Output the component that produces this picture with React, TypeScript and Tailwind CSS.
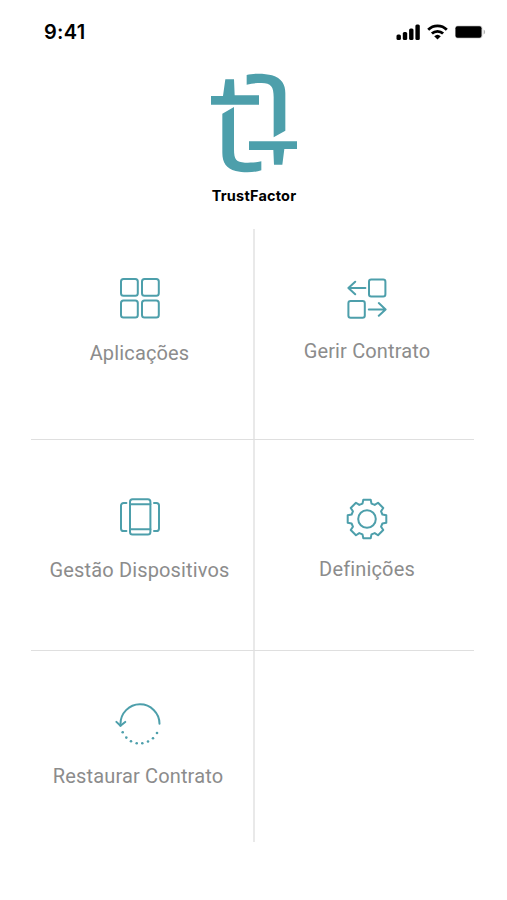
import type { ReactNode } from "react";

const TEAL = "#4d9fab";

type MenuItem = {
  label: string;
  icon: ReactNode;
  className: string;
  labelClassName: string;
};

const iconProps = {
  fill: "none",
  stroke: TEAL,
  strokeWidth: 2,
  strokeLinecap: "round",
  strokeLinejoin: "round",
} as const;

function AppsIcon() {
  return (
    <svg width="40" height="41" viewBox="0 0 40 41" {...iconProps}>
      <rect x="1" y="1" width="16.8" height="16.8" rx="2.5" />
      <rect x="22" y="1" width="16.8" height="16.8" rx="2.5" />
      <rect x="1" y="22.6" width="16.8" height="16.8" rx="2.5" />
      <rect x="22" y="22.6" width="16.8" height="16.8" rx="2.5" />
    </svg>
  );
}

function ContractIcon() {
  return (
    <svg width="40" height="42" viewBox="0 0 40 42" {...iconProps}>
      <rect x="22" y="1.6" width="16.4" height="16.8" rx="2.2" />
      <rect x="1.4" y="23" width="16.4" height="16.8" rx="2.2" />
      <path d="M18.4 10H1.4M8.2 3.7 1.4 10l6.8 6.3" />
      <path d="M21.8 31.4h16.8M31.8 25.1l6.8 6.3-6.8 6.3" />
    </svg>
  );
}

function DevicesIcon() {
  return (
    <svg width="40" height="38" viewBox="0 0 40 38" {...iconProps}>
      <rect x="10" y="1.2" width="20.4" height="35.4" rx="2.5" />
      <path d="M10 6.2h20.4M10 31.2h20.4" />
      <path d="M6.4 5H3.6A2.6 2.6 0 0 0 1 7.6v22.8A2.6 2.6 0 0 0 3.6 33h2.8" />
      <path d="M34 5h2.4A2.6 2.6 0 0 1 39 7.6v22.8a2.6 2.6 0 0 1-2.6 2.6H34" />
    </svg>
  );
}

// One tooth, repeated every 45 degrees around the centre
const TOOTH = [
  [-4.5, -15.4],
  [-3.7, -19.3],
  [3.7, -19.3],
  [4.5, -15.4],
];

const GEAR_POINTS = Array.from({ length: 8 }, (_, i) => {
  const a = (i * Math.PI) / 4;
  return TOOTH.map(([x, y]) => {
    const px = x * Math.cos(a) - y * Math.sin(a);
    const py = x * Math.sin(a) + y * Math.cos(a);
    return `${px.toFixed(2)},${py.toFixed(2)}`;
  }).join(" ");
}).join(" ");

function GearIcon() {
  return (
    <svg width="42" height="42" viewBox="-21 -21 42 42" {...iconProps}>
      <polygon points={GEAR_POINTS} />
      <circle r="8.8" />
    </svg>
  );
}

const DOTS = [
  [7.7, 29.3],
  [11.3, 34.6],
  [16, 38.3],
  [21.7, 40.3],
  [27.3, 40.3],
  [33, 38.5],
  [38, 35.2],
  [42, 30],
];

function RestoreIcon() {
  return (
    <svg width="46" height="43" viewBox="0 0 46 43" {...iconProps}>
      <path d="M5.5 22.7V21A19.5 19.5 0 0 1 44.5 20.7" />
      <path d="M1.4 18.9l4.1 3.9 4.7-3.9" />
      {DOTS.map(([x, y]) => (
        <circle key={x} cx={x} cy={y} r="1.3" fill={TEAL} stroke="none" />
      ))}
    </svg>
  );
}

function Logo() {
  return (
    <svg width="88" height="101" viewBox="45 39 264 303" fill={TEAL}>
      <path d="M91 58H117L119 106H192V134H48V108H84Z" />
      <path d="M155 45C176 39 211 40 231 46C260 55 271 73 271 100V212L236 232V112C236 80 228 69 200 69C184 69 171 70 155 74Z" />
      <path d="M117 141V268C117 299 124 307 150 308C168 308 183 308 199 304V331C178 338 146 339 122 333C94 325 82 308 82 278V161Z" />
      <path d="M162 244H306V267H268L262 314H237L235 270H162Z" />
    </svg>
  );
}

function StatusBar() {
  return (
    <div className="flex h-16 items-center justify-between pr-[21px] pl-11">
      <span className="font-['Inter',sans-serif] text-[20px] font-semibold tracking-[0.3px]">
        9:41
      </span>
      <div className="flex items-center gap-[7px]">
        <svg width="24" height="16" viewBox="0 0 24 16">
          <rect x="0.5" y="10.5" width="4.4" height="5.5" rx="1.5" />
          <rect x="6.8" y="8" width="4.4" height="8" rx="1.5" />
          <rect x="13.1" y="4.5" width="4.4" height="11.5" rx="1.5" />
          <rect x="19.4" y="0.5" width="4.4" height="15.5" rx="1.5" />
        </svg>
        <svg
          width="21"
          height="16"
          viewBox="0 0 21 16"
          fill="none"
          stroke="black"
          strokeWidth="2.8"
        >
          <path d="M1.2 5.8a13.2 13.2 0 0 1 18.6 0" />
          <path d="M4.9 9.6a8 8 0 0 1 11.2 0" />
          <path
            d="M7.2 12.2a4.8 4.8 0 0 1 6.6 0L10.5 15.6Z"
            fill="black"
            stroke="none"
          />
        </svg>
        <svg width="31" height="14" viewBox="0 0 31 14">
          <rect x="0" y="0.5" width="27.5" height="13" rx="3" fill="#d4d4d4" />
          <rect x="0.5" y="1.3" width="26" height="11.4" rx="2" />
          <path d="M28.6 4.5c2 .8 2 4.2 0 5Z" fill="#b5b5b5" />
        </svg>
      </div>
    </div>
  );
}

const ITEMS: MenuItem[] = [
  {
    label: "Aplicações",
    icon: <AppsIcon />,
    className: "pt-[49px] pr-[5px]",
    labelClassName: "mt-5",
  },
  {
    label: "Gerir Contrato",
    icon: <ContractIcon />,
    className: "pt-[49px] pl-[5px]",
    labelClassName: "mt-[17px]",
  },
  {
    label: "Gestão Dispositivos",
    icon: <DevicesIcon />,
    className: "pt-[58px] pr-[5px]",
    labelClassName: "mt-5",
  },
  {
    label: "Definições",
    icon: <GearIcon />,
    className: "pt-[58px] pl-[5px]",
    labelClassName: "mt-[15px]",
  },
  {
    label: "Restaurar Contrato",
    icon: <RestoreIcon />,
    className: "pt-[52px] pr-2",
    labelClassName: "mt-4",
  },
];

function Tile({ item }: { item: MenuItem }) {
  return (
    <button className={`flex flex-col items-center ${item.className}`}>
      {item.icon}
      <span
        className={`font-['Roboto',sans-serif] text-[20px] leading-7 font-normal tracking-[0.15px] whitespace-nowrap text-[#8c8c8c] ${item.labelClassName}`}
      >
        {item.label}
      </span>
    </button>
  );
}

export default function App() {
  const rows = [ITEMS.slice(0, 2), ITEMS.slice(2, 4), ITEMS.slice(4)];

  return (
    <div className="h-[900px] w-[507px] overflow-hidden bg-white text-black">
      <StatusBar />
      <header className="flex flex-col items-center pt-[9px] pl-px">
        <Logo />
        <h1 className="mt-3 font-['Inter',sans-serif] text-[14.5px] leading-5 font-bold tracking-[0.2px]">
          TrustFactor
        </h1>
      </header>
      <main className="mt-[23px] ml-[31px] w-[443px]">
        {rows.map((row, index) => (
          <div
            key={index}
            className={
              index < 2
                ? "flex h-[211px] border-b border-[#dfdfdf]"
                : "flex h-[191px]"
            }
          >
            <div className="flex w-[224px] flex-col border-r-2 border-[#e9e9e9]">
              <Tile item={row[0]} />
            </div>
            <div className="flex flex-1 flex-col">
              {row[1] && <Tile item={row[1]} />}
            </div>
          </div>
        ))}
      </main>
    </div>
  );
}
